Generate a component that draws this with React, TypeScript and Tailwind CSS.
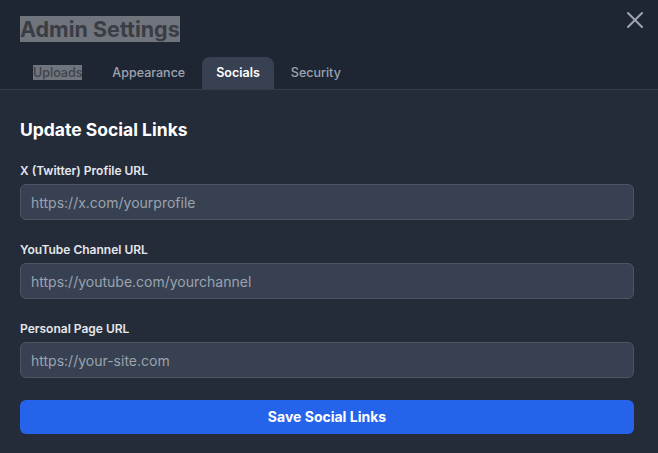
import { X } from "lucide-react";

const fields = [
  { label: "X (Twitter) Profile URL", placeholder: "https://x.com/yourprofile" },
  { label: "YouTube Channel URL", placeholder: "https://youtube.com/yourchannel" },
  { label: "Personal Page URL", placeholder: "https://your-site.com" },
];

const tabs = ["Uploads", "Appearance", "Socials", "Security"];

export default function App() {
  return (
    <div className="w-[658px] h-[453px] flex flex-col bg-[#242b39] font-['Inter',sans-serif] overflow-hidden">
      <div className="bg-[#1f2633] border-b border-[#333c4b]">
        <div className="flex items-start justify-between pl-5 pr-[9px] pt-[15px]">
          <h2 className="text-[21.5px] leading-7 font-bold">
            <span className="bg-[#70747c] text-[#3a3d44]">Admin Settings</span>
          </h2>
          <button className="text-[#9ca3af] mt-[-9px]">
            <X size={28} strokeWidth={1.75} />
          </button>
        </div>
        <div className="flex gap-1 px-5 mt-[14px]">
          {tabs.map((t) => {
            const active = t === "Socials";
            return (
              <div
                key={t}
                className={
                  active
                    ? "px-[14px] py-[7px] rounded-t-lg bg-[#374151] text-white font-semibold text-[12.5px] leading-[18px]"
                    : "px-[13px] py-[7px] text-[#9ca3af] font-medium text-[12.5px] leading-[18px]"
                }
              >
                {t === "Uploads" ? (
                  <span className="bg-[#70747c] text-[#3f434a]">{t}</span>
                ) : (
                  t
                )}
              </div>
            );
          })}
        </div>
      </div>
      <div className="pl-5 pr-6 pt-[26px] flex flex-col">
        <h3 className="text-[17.5px] leading-7 font-bold text-white">Update Social Links</h3>
        {fields.map((f, i) => (
          <div key={f.label} className={i === 0 ? "flex flex-col mt-[19px]" : "flex flex-col mt-[22px]"}>
            <label className="text-xs leading-4 font-semibold text-[#e5e7eb]">{f.label}</label>
            <input
              placeholder={f.placeholder}
              className="mt-[5px] h-9 w-full rounded-md bg-[#374151] border border-[#4b5563] px-[10px] text-sm text-white placeholder:text-[#9ca3af] outline-none"
            />
          </div>
        ))}
        <button className="mt-[22px] h-[34px] w-full rounded-md bg-[#2563eb] text-white text-sm font-bold">
          Save Social Links
        </button>
      </div>
    </div>
  );
}
